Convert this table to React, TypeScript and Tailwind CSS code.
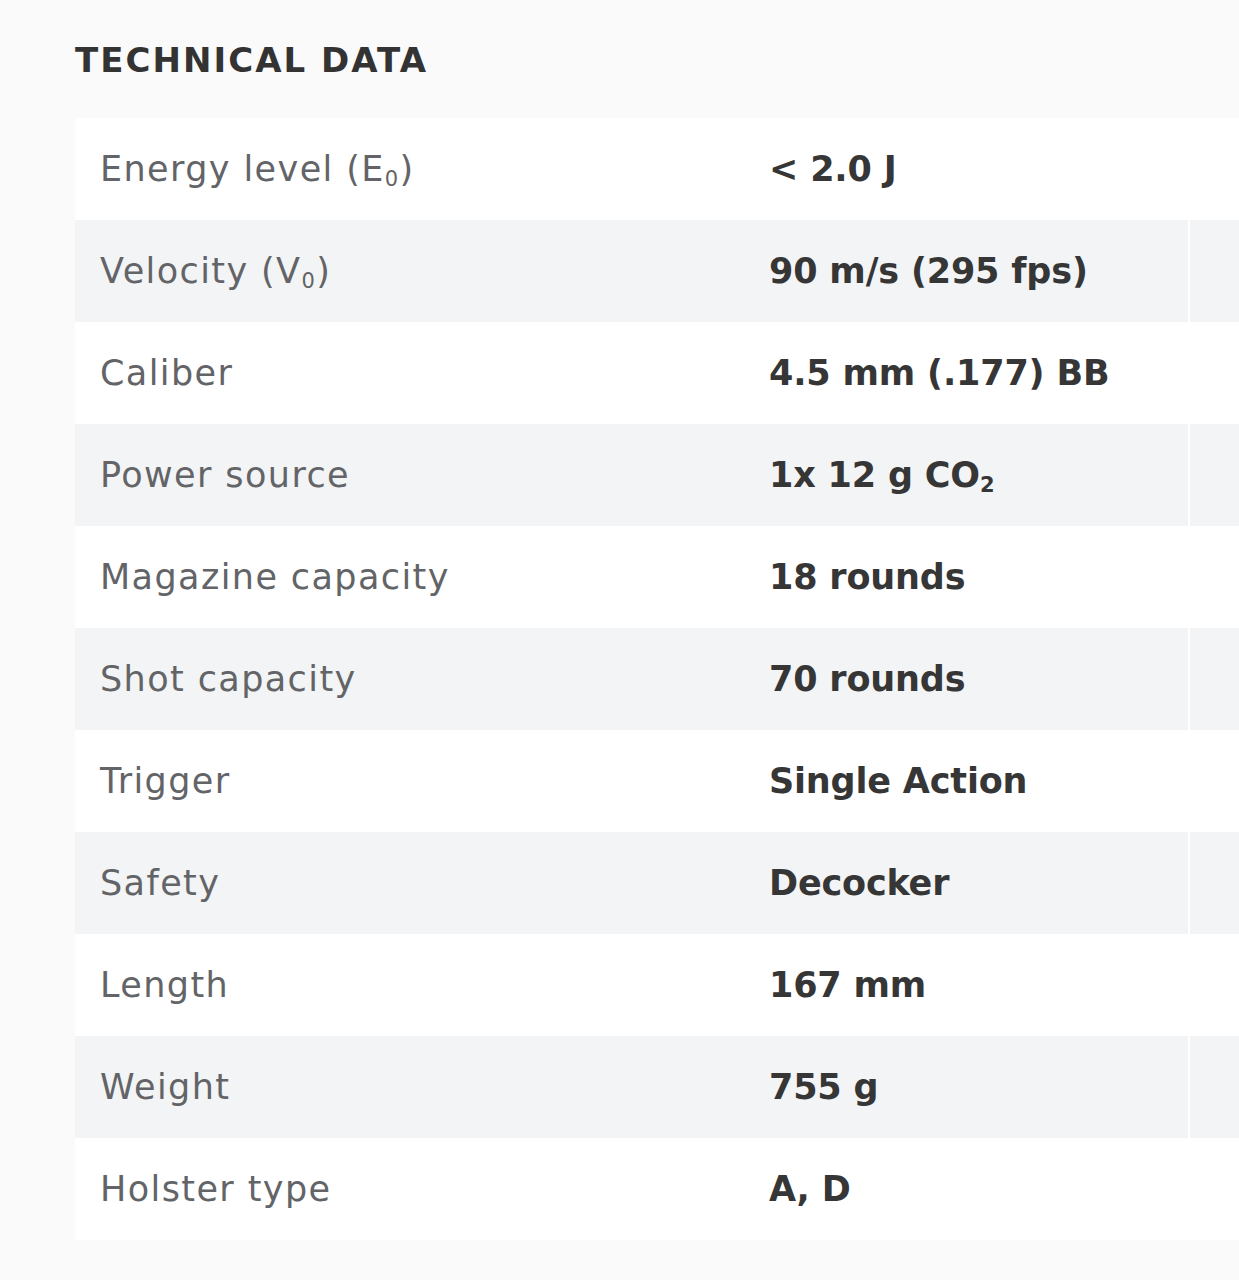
const rows: { label: React.ReactNode; value: React.ReactNode }[] = [
  { label: <>Energy level (E<sub className="text-[0.6em]">0</sub>)</>, value: "< 2.0 J" },
  { label: <>Velocity (V<sub className="text-[0.6em]">0</sub>)</>, value: "90 m/s (295 fps)" },
  { label: "Caliber", value: "4.5 mm (.177) BB" },
  { label: "Power source", value: <>1x 12 g CO<sub className="text-[0.6em]">2</sub></> },
  { label: "Magazine capacity", value: "18 rounds" },
  { label: "Shot capacity", value: "70 rounds" },
  { label: "Trigger", value: "Single Action" },
  { label: "Safety", value: "Decocker" },
  { label: "Length", value: "167 mm" },
  { label: "Weight", value: "755 g" },
  { label: "Holster type", value: "A, D" },
];

export default function App() {
  return (
    <div
      className="min-h-[1280px] w-[1239px] overflow-hidden bg-[#fafafa] pl-[75px] pt-[38px]"
      style={{ fontFamily: '"DejaVu Sans", "Liberation Sans", sans-serif' }}
    >
      <h2 className="text-[34px] font-bold leading-[44px] tracking-[0.06em] text-[#333333]">
        TECHNICAL DATA
      </h2>

      <div className="mt-[36px] w-[1200px]">
        {rows.map((row, i) => (
          <div
            key={i}
            className={`grid h-[102px] grid-cols-[669px_444px_1fr] items-center ${
              i % 2 === 0 ? "bg-white" : "bg-[#f3f4f5]"
            }`}
          >
            <div className="pl-[25px] text-[35px] tracking-[0.04em] text-[#636467]">{row.label}</div>
            <div className="pl-[25px] text-[35px] font-bold tracking-[-0.005em] text-[#363636]">{row.value}</div>
            <div className="h-full border-l-2 border-white" />
          </div>
        ))}
      </div>
    </div>
  );
}
